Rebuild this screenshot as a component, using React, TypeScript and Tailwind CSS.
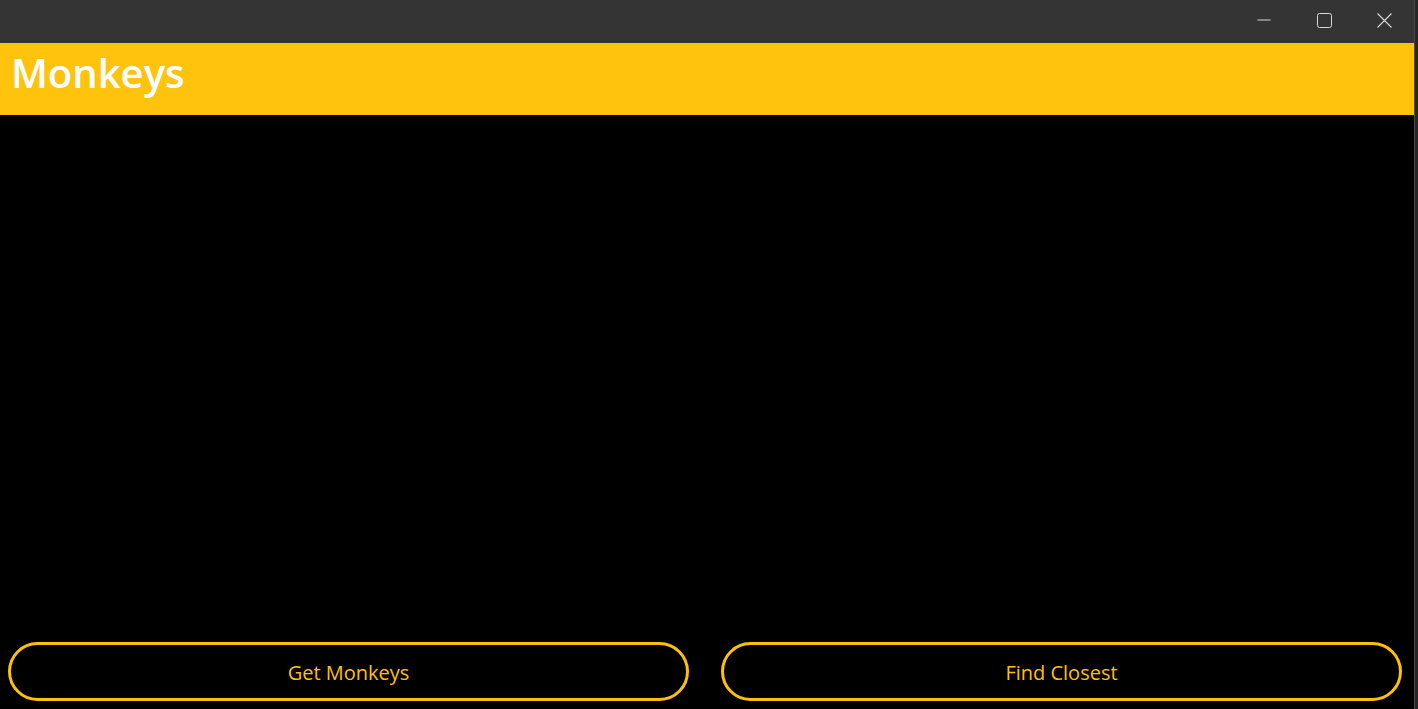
import React from 'react';

const font = { fontFamily: '"Open Sans", "Noto Sans", "Liberation Sans", sans-serif' };

const App = () => {
  return (
    <div className="flex w-[1418px] h-[709px] bg-black overflow-hidden" style={font}>
      <div className="flex flex-col w-[1414px] h-full">
        {/* title bar */}
        <div className="h-[43px] bg-[#343434] flex justify-end items-start">
          <div className="w-[60px] h-[40px] flex items-center justify-center">
            <svg width="14" height="14" viewBox="0 0 14 14">
              <path d="M0.5 7 H13.5" stroke="#d8d8d8" strokeWidth="1" />
            </svg>
          </div>
          <div className="w-[60px] h-[40px] flex items-center justify-center">
            <svg width="15" height="15" viewBox="0 0 15 15">
              <rect x="0.5" y="0.5" width="14" height="14" rx="2" fill="none" stroke="#d8d8d8" strokeWidth="1" />
            </svg>
          </div>
          <div className="w-[60px] h-[40px] flex items-center justify-center">
            <svg width="15" height="15" viewBox="0 0 15 15">
              <path d="M0.5 0.5 L14.5 14.5 M14.5 0.5 L0.5 14.5" stroke="#d8d8d8" strokeWidth="1.1" />
            </svg>
          </div>
        </div>

        {/* header */}
        <div className="h-[72px] bg-[#ffc30d] flex items-center pl-[11px]">
          <span className="text-white text-[40px] font-semibold leading-none -mt-[13px]">Monkeys</span>
        </div>

        {/* content */}
        <div className="flex-1 bg-black"></div>

        {/* buttons */}
        <div className="flex gap-[32px] pl-[8px] pr-[12px] pb-[8px]">
          <button className="flex-1 h-[59px] rounded-full border-[3px] border-[#ffc107] text-[#ffc107] text-[20px] bg-black pt-[2px]">
            Get Monkeys
          </button>
          <button className="flex-1 h-[59px] rounded-full border-[3px] border-[#ffc107] text-[#ffc107] text-[20px] bg-black pt-[2px]">
            Find Closest
          </button>
        </div>
      </div>
      <div className="w-[4px] h-full bg-[#262626] border-l border-[#4a4a4a]"></div>
    </div>
  );
};

export default App;
